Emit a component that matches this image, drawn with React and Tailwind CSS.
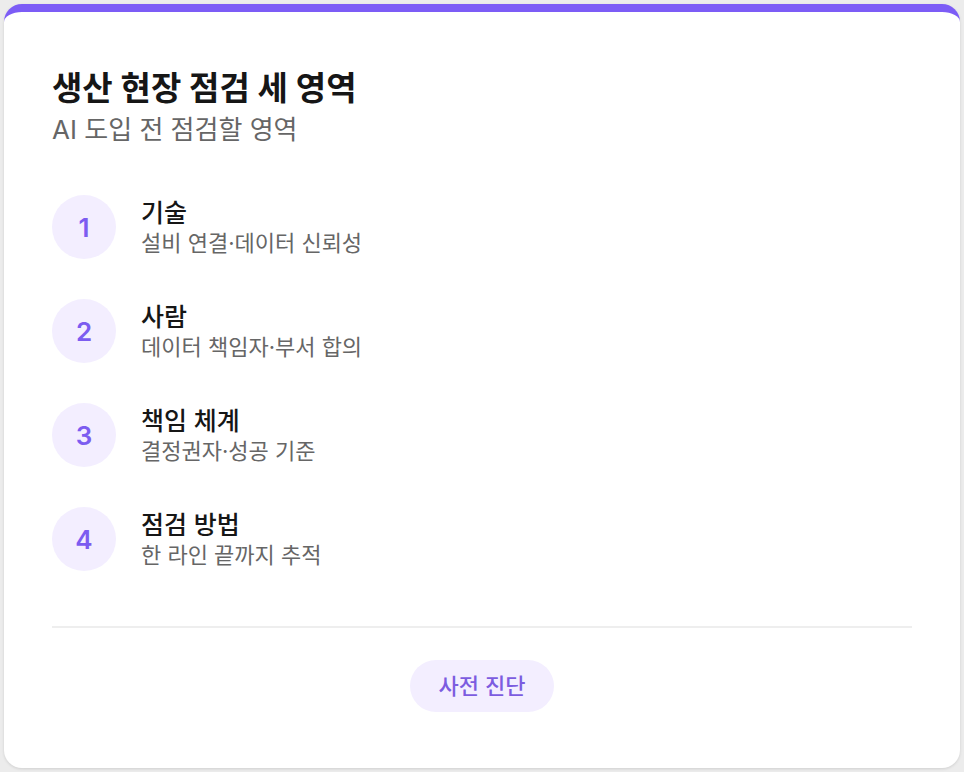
export default function App() {
  const items = [
    ["1", "기술", "설비 연결·데이터 신뢰성"],
    ["2", "사람", "데이터 책임자·부서 합의"],
    ["3", "책임 체계", "결정권자·성공 기준"],
    ["4", "점검 방법", "한 라인 끝까지 추적"],
  ];
  return (
    <div className="w-[964px] h-[772px] bg-[#ececec] p-[4px]" style={{ fontFamily: "Inter, 'Noto Sans CJK KR', sans-serif" }}>
      <div className="h-full bg-white rounded-[18px] border-t-[8px] border-[#7c5cf6] shadow-[0_1px_3px_rgba(0,0,0,0.12)] px-[48px] pt-[55px] flex flex-col">
        <h1 className="text-[33px] font-bold text-[#161616] leading-[42px]">생산 현장 점검 세 영역</h1>
        <p className="text-[26px] text-[#666] leading-[34px] mt-[4px]">AI 도입 전 점검할 영역</p>
        <div className="mt-[48px] flex flex-col gap-[40px]">
          {items.map(([n, t, d]) => (
            <div key={n} className="flex items-center gap-[25px]">
              <div className="w-[64px] h-[64px] rounded-full bg-[#f3eeff] flex items-center justify-center text-[26px] font-semibold text-[#7c5cf0]">{n}</div>
              <div>
                <div className="text-[25px] font-medium text-[#161616] leading-[32px]">{t}</div>
                <div className="text-[22px] text-[#666] leading-[28px]">{d}</div>
              </div>
            </div>
          ))}
        </div>
        <div className="mt-[55px] h-[2px] bg-[#eeeeee]" />
        <div className="flex justify-center mt-[32px]">
          <div className="w-[144px] h-[52px] rounded-full bg-[#f3eeff] flex items-center justify-center text-[22px] font-medium text-[#7c5ce0]">사전 진단</div>
        </div>
      </div>
    </div>
  );
}
